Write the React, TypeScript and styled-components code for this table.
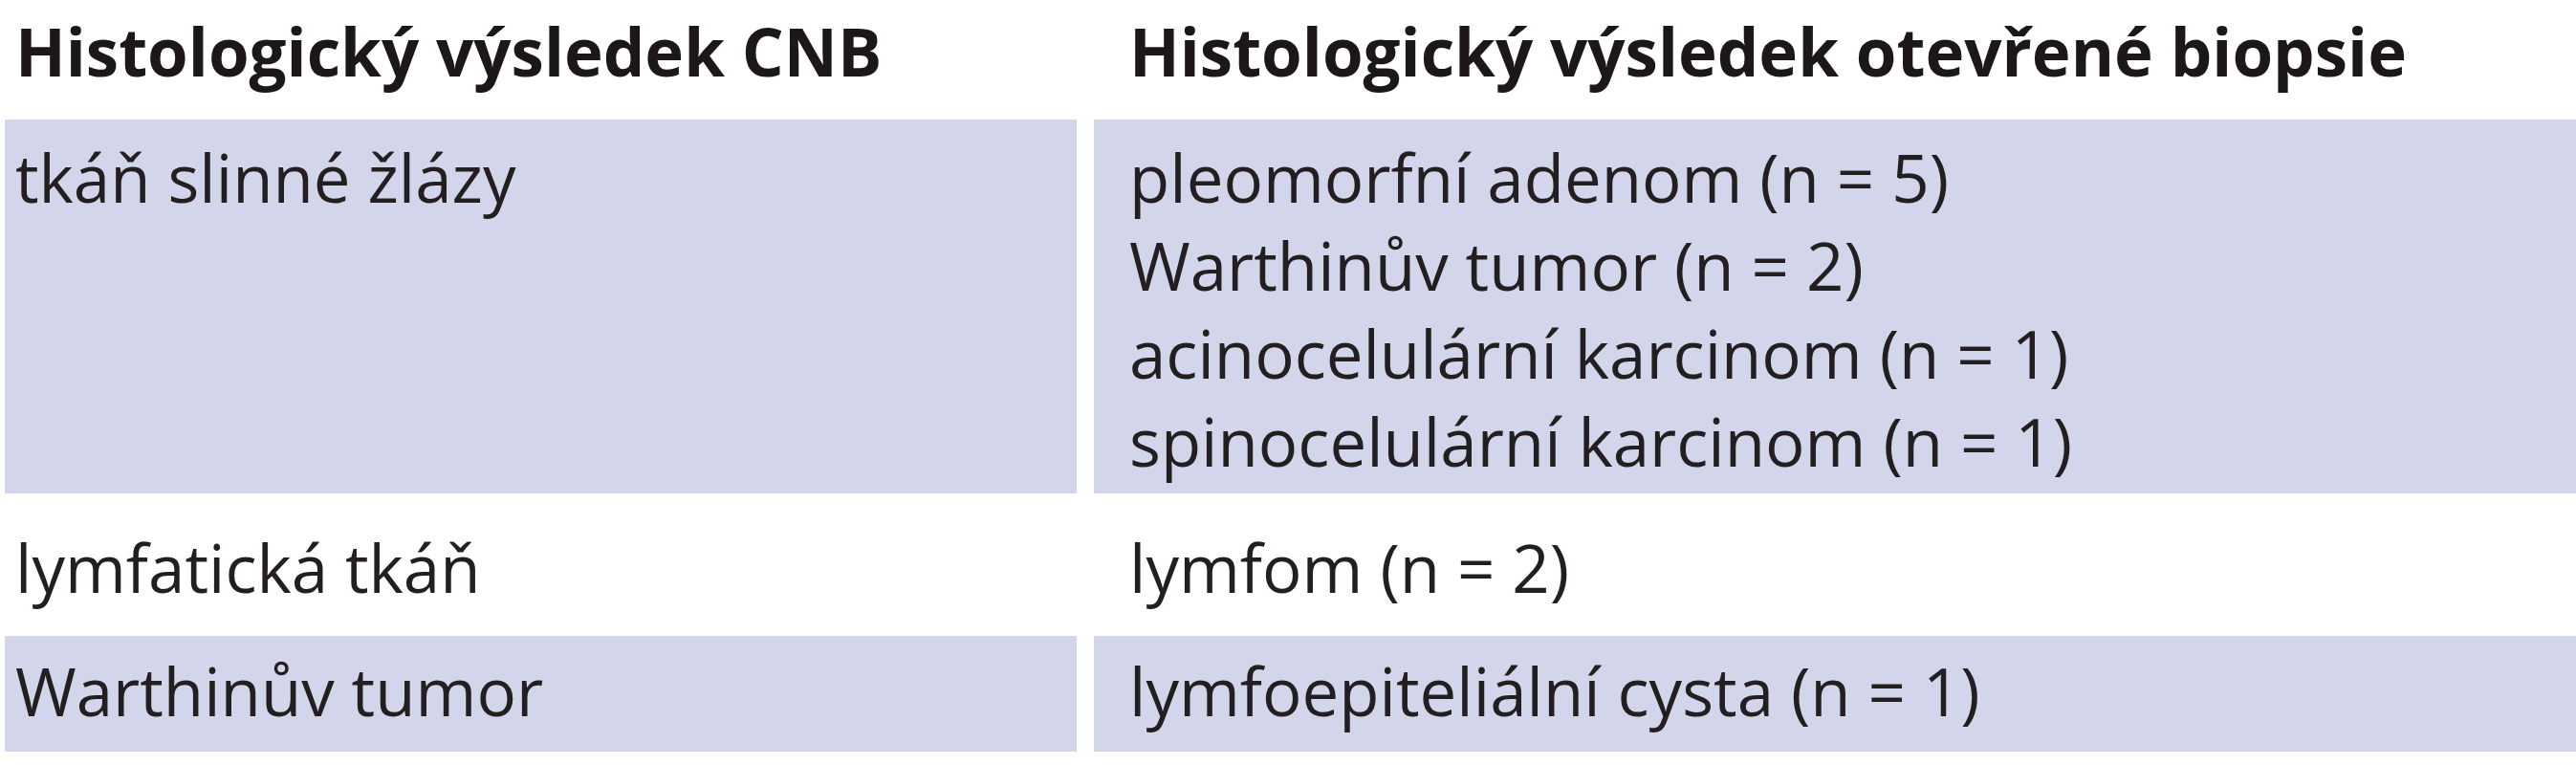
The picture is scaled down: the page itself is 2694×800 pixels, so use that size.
import React from "react";
import styled, { createGlobalStyle } from "styled-components";

const GlobalStyle = createGlobalStyle`
  html, body {
    margin: 0;
    padding: 0;
    background: #fff;
  }
  body {
    font-family: "Open Sans", "Noto Sans", sans-serif;
    color: #231f20;
  }
`;

const Table = styled.div`
  display: grid;
  grid-template-columns: 1121px 1fr;
  column-gap: 18px;
  margin-left: 5px;
  width: 2689px;
`;

const HeadCell = styled.div<{ $first?: boolean }>`
  height: 125px;
  box-sizing: border-box;
  padding: 7px 0 0 ${({ $first }) => ($first ? "11px" : "37px")};
  font-size: 69px;
  font-weight: 700;
  line-height: 92px;
  color: #1c1718;
  white-space: nowrap;
`;

const Cell = styled.div<{
  $first?: boolean;
  $shaded?: boolean;
  $height: number;
  $padTop: number;
}>`
  height: ${({ $height }) => $height}px;
  box-sizing: border-box;
  padding: ${({ $padTop }) => $padTop}px 0 0
    ${({ $first }) => ($first ? "11px" : "37px")};
  background: ${({ $shaded }) => ($shaded ? "#d3d6ea" : "#fff")};
  font-size: 69px;
  font-weight: 400;
  line-height: 92px;
  white-space: nowrap;
`;

const TextLine = styled.div``;

interface Row {
  cnb: string;
  biopsy: string[];
  height: number;
  padTop: number;
  shaded: boolean;
}

const rows: Row[] = [
  {
    cnb: "tkáň slinné žlázy",
    biopsy: [
      "pleomorfní adenom (n = 5)",
      "Warthinův tumor (n = 2)",
      "acinocelulární karcinom (n = 1)",
      "spinocelulární karcinom (n = 1)",
    ],
    height: 391,
    padTop: 14,
    shaded: true,
  },
  {
    cnb: "lymfatická tkáň",
    biopsy: ["lymfom (n = 2)"],
    height: 149,
    padTop: 31,
    shaded: false,
  },
  {
    cnb: "Warthinův tumor",
    biopsy: ["lymfoepiteliální cysta (n = 1)"],
    height: 121,
    padTop: 11,
    shaded: true,
  },
];

export default function App() {
  return (
    <>
      <GlobalStyle />
      <Table>
        <HeadCell $first>Histologický výsledek CNB</HeadCell>
        <HeadCell>Histologický výsledek otevřené biopsie</HeadCell>
        {rows.map((row) => (
          <React.Fragment key={row.cnb}>
            <Cell
              $first
              $shaded={row.shaded}
              $height={row.height}
              $padTop={row.padTop}
            >
              {row.cnb}
            </Cell>
            <Cell
              $shaded={row.shaded}
              $height={row.height}
              $padTop={row.padTop}
            >
              {row.biopsy.map((line) => (
                <TextLine key={line}>{line}</TextLine>
              ))}
            </Cell>
          </React.Fragment>
        ))}
      </Table>
    </>
  );
}
